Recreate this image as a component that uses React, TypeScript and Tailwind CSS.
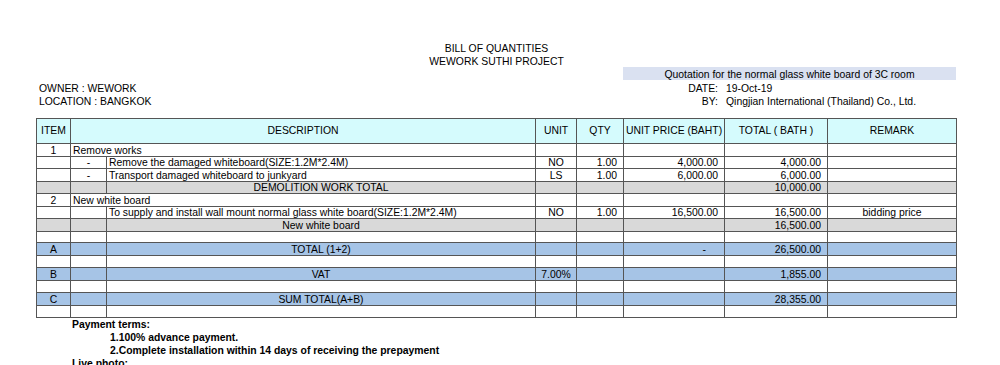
import React from "react";

type Align = "l" | "c" | "r";
type Cell = { t?: string; span?: 2; a?: Align; pr?: string };
type Row = { cells: Cell[]; bg?: string; h: string };

const COLS =
  "grid grid-cols-[34px_36px_429px_41px_47px_101px_103px_129px]";

const alignCls: Record<Align, string> = {
  l: "justify-start pl-[2px]",
  c: "justify-center",
  r: "justify-end pr-[6px]",
};

const E: Cell = {};
const emptyRow = (h: string): Row => ({ h, cells: [E, E, E, E, E, E, E, E] });

const rows: Row[] = [
  {
    h: "h-[12px]",
    cells: [{ t: "1", a: "c" }, { t: "Remove works", span: 2, a: "l" }, E, E, E, E, E],
  },
  {
    h: "h-[13px]",
    cells: [
      E,
      { t: "-", a: "c" },
      { t: "Remove the damaged whiteboard(SIZE:1.2M*2.4M)", a: "l" },
      { t: "NO", a: "c" },
      { t: "1.00", a: "r" },
      { t: "4,000.00", a: "r" },
      { t: "4,000.00", a: "r" },
      E,
    ],
  },
  {
    h: "h-[12px]",
    cells: [
      E,
      { t: "-", a: "c" },
      { t: "Transport damaged whiteboard to junkyard", a: "l" },
      { t: "LS", a: "c" },
      { t: "1.00", a: "r" },
      { t: "6,000.00", a: "r" },
      { t: "6,000.00", a: "r" },
      E,
    ],
  },
  {
    h: "h-[13px]",
    bg: "bg-[#d9d9d9]",
    cells: [E, E, { t: "DEMOLITION WORK  TOTAL", a: "c" }, E, E, E, { t: "10,000.00", a: "r" }, E],
  },
  {
    h: "h-[12px]",
    cells: [{ t: "2", a: "c" }, { t: "New white board", span: 2, a: "l" }, E, E, E, E, E],
  },
  {
    h: "h-[13px]",
    cells: [
      E,
      E,
      { t: "To supply and install wall mount normal glass white board(SIZE:1.2M*2.4M)", a: "l" },
      { t: "NO", a: "c" },
      { t: "1.00", a: "r" },
      { t: "16,500.00", a: "r" },
      { t: "16,500.00", a: "r" },
      { t: "bidding price", a: "c" },
    ],
  },
  {
    h: "h-[12px]",
    bg: "bg-[#d9d9d9]",
    cells: [E, E, { t: "New white board", a: "c" }, E, E, E, { t: "16,500.00", a: "r" }, E],
  },
  emptyRow("h-[12px]"),
  {
    h: "h-[13px]",
    bg: "bg-[#a6c4e6]",
    cells: [
      { t: "A", a: "c" },
      E,
      { t: "TOTAL (1+2)", a: "c" },
      E,
      E,
      { t: "-", a: "r", pr: "pr-[18px]" },
      { t: "26,500.00", a: "r" },
      E,
    ],
  },
  emptyRow("h-[12px]"),
  {
    h: "h-[13px]",
    bg: "bg-[#a6c4e6]",
    cells: [
      { t: "B", a: "c" },
      E,
      { t: "VAT", a: "c" },
      { t: "7.00%", a: "c" },
      E,
      E,
      { t: "1,855.00", a: "r" },
      E,
    ],
  },
  emptyRow("h-[12px]"),
  {
    h: "h-[13px]",
    bg: "bg-[#a6c4e6]",
    cells: [{ t: "C", a: "c" }, E, { t: "SUM TOTAL(A+B)", a: "c" }, E, E, E, { t: "28,355.00", a: "r" }, E],
  },
  emptyRow("h-[12px]"),
];

function TableRow({ row }: { row: Row }) {
  return (
    <div className={`${COLS} ${row.h} ${row.bg ?? ""}`}>
      {row.cells.map((c, i) => (
        <div
          key={i}
          className={`flex items-center overflow-visible whitespace-nowrap border-r border-b border-[#555] pt-[2px] ${
            c.span === 2 ? "col-span-2" : ""
          } ${alignCls[c.a ?? "l"]} ${c.pr ?? ""}`}
        >
          {c.t}
        </div>
      ))}
    </div>
  );
}

const headers = ["UNIT", "QTY", "UNIT PRICE (BAHT)", "TOTAL ( BATH )", "REMARK"];

export default function App() {
  return (
    <div className="min-h-[365px] w-[1000px] bg-white pt-[41px] text-[10.4px] leading-none text-black [font-family:'Liberation_Sans',Arial,sans-serif]">
      <div className="ml-[36px] w-[921px]">
        {/* title block */}
        <div className="flex h-[13px] items-center justify-center pt-[4px]">BILL OF QUANTITIES</div>
        <div className="flex h-[13px] items-center justify-center pt-[4px]">WEWORK SUTHI PROJECT</div>
        <div className={`${COLS} h-[13px]`}>
          <div className="col-span-5" />
          <div className="col-span-3 flex items-center justify-center bg-[#dae1f1] pt-[3px]">
            Quotation for the normal glass white board of 3C room
          </div>
        </div>
        <div className={`${COLS} h-[13px] items-center pt-[4px]`}>
          <div className="col-span-5 pl-[3px]">OWNER : WEWORK</div>
          <div className="pr-[6px] text-right">DATE:</div>
          <div className="col-span-2 pl-[2px]">19-Oct-19</div>
        </div>
        <div className={`${COLS} h-[13px] items-center pt-[4px]`}>
          <div className="col-span-5 pl-[3px]">LOCATION : BANGKOK</div>
          <div className="pr-[6px] text-right">BY:</div>
          <div className="col-span-2 whitespace-nowrap pl-[2px]">
            Qingjian International (Thailand) Co., Ltd.
          </div>
        </div>
        <div className="h-[12px]" />

        {/* quantities table */}
        <div className="border-l border-t border-[#555]">
          <div className={`${COLS} h-[25px] bg-[#d5fbfd]`}>
            <div className="flex items-center justify-center border-r border-b border-[#555]">ITEM</div>
            <div className="col-span-2 flex items-center justify-center border-r border-b border-[#555]">
              DESCRIPTION
            </div>
            {headers.map((h) => (
              <div
                key={h}
                className="flex items-center justify-center whitespace-nowrap border-r border-b border-[#555]"
              >
                {h}
              </div>
            ))}
          </div>
          {rows.map((r, i) => (
            <TableRow key={i} row={r} />
          ))}
        </div>

        {/* payment terms */}
        <div className="font-bold">
          <div className="flex h-[13px] items-center pl-[36px] pt-[2px]">Payment terms:</div>
          <div className="flex h-[13px] items-center pl-[74px] pt-[2px]">1.100% advance payment.</div>
          <div className="flex h-[13px] items-center pl-[74px] pt-[2px]">
            2.Complete installation within 14 days of receiving the prepayment
          </div>
          <div className="flex h-[13px] items-center pl-[36px] pt-[2px]">Live photo:</div>
        </div>
      </div>
    </div>
  );
}
